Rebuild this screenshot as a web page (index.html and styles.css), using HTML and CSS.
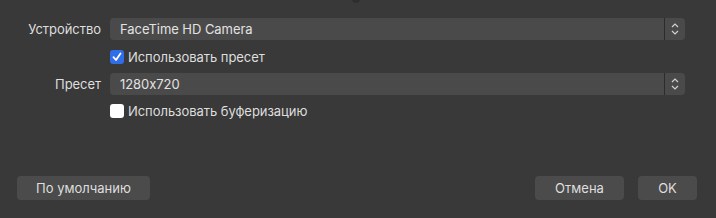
FILE: index.html
```html
<!DOCTYPE html>
<html lang="ru">
<head>
<meta charset="utf-8">
<link rel="stylesheet" href="styles.css">
</head>
<body>
<div class="dialog">
  <div class="handle"></div>
  <div class="form">
    <div class="label">Устройство</div>
    <div class="combo"><span class="value">FaceTime HD Camera</span><span class="arrows"><svg width="10" height="14" viewBox="0 0 10 14"><path d="M2 5 L5 2 L8 5 M2 9 L5 12 L8 9" fill="none" stroke="#d0d0d0" stroke-width="1.2"/></svg></span></div>
    <div></div>
    <label class="check"><span class="box on"><svg width="14" height="14" viewBox="0 0 14 14"><path d="M3.5 7.2 L6 10 L10.5 3.5" fill="none" stroke="#fff" stroke-width="1.8" stroke-linecap="round" stroke-linejoin="round"/></svg></span>Использовать пресет</label>
    <div class="label">Пресет</div>
    <div class="combo"><span class="value">1280x720</span><span class="arrows"><svg width="10" height="14" viewBox="0 0 10 14"><path d="M2 5 L5 2 L8 5 M2 9 L5 12 L8 9" fill="none" stroke="#d0d0d0" stroke-width="1.2"/></svg></span></div>
    <div></div>
    <label class="check"><span class="box"></span>Использовать буферизацию</label>
  </div>
  <div class="buttons">
    <button class="btn default">По умолчанию</button>
    <div class="spacer"></div>
    <button class="btn cancel">Отмена</button>
    <button class="btn ok">OK</button>
  </div>
</div>
</body>
</html>
```
FILE: styles.css
```css
html, body {
  margin: 0;
  padding: 0;
  background: #393939;
}
body {
  width: 716px;
  height: 218px;
  overflow: hidden;
  font-family: Inter, "Liberation Sans", sans-serif;
  font-size: 13px;
  font-feature-settings: "calt" 0;
  letter-spacing: -0.05px;
  color: #dedede;
}
.dialog {
  position: relative;
  height: 218px;
}
.handle {
  position: absolute;
  left: 352px;
  top: -5px;
  width: 8px;
  height: 8px;
  border-radius: 50%;
  background: #2e2e2e;
}
.form {
  display: grid;
  grid-template-columns: 101px 575px;
  column-gap: 9px;
  row-gap: 0;
  padding-top: 18px;
  grid-template-rows: 22px 33px 22px 32px;
}
.label {
  text-align: right;
  line-height: 22px;
}
.combo {
  display: flex;
  height: 22px;
  background: #4a4a4a;
  border-radius: 4px;
  overflow: hidden;
}
.value {
  flex: 1;
  padding-left: 10px;
  line-height: 22px;
  color: #e2e2e2;
}
.arrows {
  width: 20px;
  border-left: 1px solid #2c2c2c;
  display: flex;
  align-items: center;
  justify-content: center;
}
.check {
  display: flex;
  align-items: center;
  gap: 4px;
  height: 14px;
  align-self: center;
  line-height: 14px;
}
.box {
  width: 14px;
  height: 14px;
  border-radius: 3px;
  background: #ffffff;
  display: flex;
}
.box.on {
  background: #2f6ee8;
}
.buttons {
  display: flex;
  padding: 0 19px 0 17px;
  margin-top: 49px;
  gap: 14px;
}
.spacer { flex: 1; }
.btn {
  height: 24px;
  border: none;
  border-radius: 4px;
  background: #4b4b4b;
  color: #dedede;
  font-family: Inter, "Liberation Sans", sans-serif;
  font-size: 13px;
  font-feature-settings: "calt" 0;
  padding: 0;
}
.btn.default { width: 133px; }
.btn.cancel { width: 89px; }
.btn.ok { width: 59px; }
```
